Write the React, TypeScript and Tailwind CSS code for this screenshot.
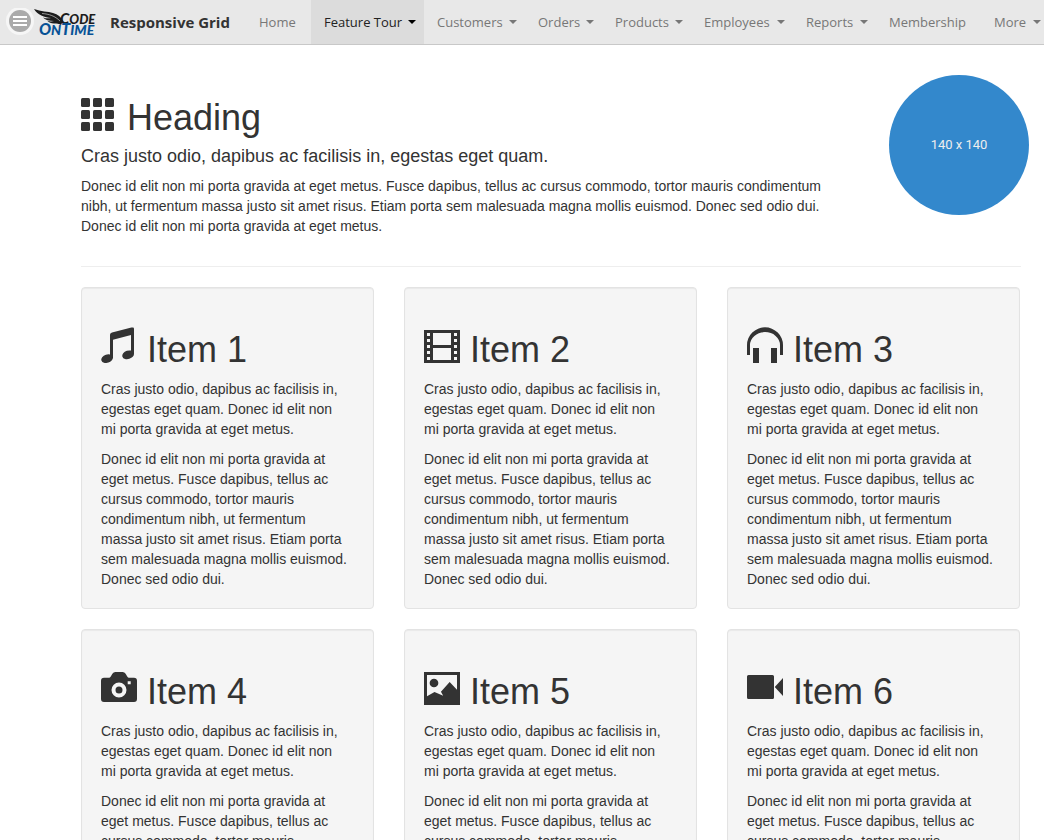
import type { ReactNode } from "react";

type NavEntry = { label: string; width: string; menu?: boolean; active?: boolean };

const navEntries: NavEntry[] = [
  { label: "Home", width: "w-[65px]" },
  { label: "Feature Tour", width: "w-[113px]", menu: true, active: true },
  { label: "Customers", width: "w-[101px]", menu: true },
  { label: "Orders", width: "w-[77px]", menu: true },
  { label: "Products", width: "w-[89px]", menu: true },
  { label: "Employees", width: "w-[102px]", menu: true },
  { label: "Reports", width: "w-[83px]", menu: true },
  { label: "Membership", width: "w-[105px]" },
  { label: "More", width: "w-[68px]", menu: true },
];

function Glyph({ children }: { children: ReactNode }) {
  return (
    <svg viewBox="0 0 1200 1200" className="size-9 shrink-0" fill="currentColor" fillRule="evenodd" aria-hidden="true">
      {children}
    </svg>
  );
}

const cells = [0, 400, 800];
const GridIcon = () => (
  <Glyph>
    {cells.map((y) => cells.map((x) => <rect key={`${x}-${y}`} x={x} y={y + 100} width="300" height="300" rx="50" />))}
  </Glyph>
);

const MusicIcon = () => (
  <Glyph>
    <path
      transform="translate(0 1200) scale(1 -1)"
      d="M368 1017l645 163q39 15 63 0t24 -49v-831q0 -55 -41.5 -95.5t-111.5 -63.5q-79 -25 -147 -4.5t-86 75t25.5 111.5t122.5 82q72 24 138 8v521l-600 -155v-606q0 -42 -44 -90t-109 -69q-79 -26 -147 -5.5t-86 75.5t25.5 111.5t122.5 82.5q72 24 138 7v639q0 38 14.5 59t53.5 34z"
    />
  </Glyph>
);

const FilmIcon = () => (
  <Glyph>
    <path d="M0 100h1200v1100H0zM100 200v100h100V200zM100 400v100h100V400zM100 600v100h100V600zM100 800v100h100V800zM100 1000v100h100v-100zM1000 200v100h100V200zM1000 400v100h100V400zM1000 600v100h100V600zM1000 800v100h100V800zM1000 1000v100h100v-100zM300 200v400h600V200zM300 700v400h600V700z" />
  </Glyph>
);

const HeadphonesIcon = () => (
  <Glyph>
    <path d="M0 930V600a600 590 0 0 1 1200 0v330h-100V600a500 430 0 0 0-1000 0v330zM200 700h200v500H200zM800 700h200v500H800z" />
  </Glyph>
);

const CameraIcon = () => (
  <Glyph>
    <path d="M100 290h170q30 0 50-30l60-100q35-60 100-60h240q65 0 100 60l60 100q20 30 50 30h170q100 0 100 100v610q0 100-100 100H100q-100 0-100-100V390q0-100 100-100zM600 450a250 250 0 1 0 0 500a250 250 0 1 0 0-500zM600 583a117 117 0 1 1 0 234a117 117 0 1 1 0-234zM890 410v100h100V410z" />
  </Glyph>
);

const PictureIcon = () => (
  <Glyph>
    <path d="M0 100h1200v1100H0zM100 200v710l250-140 290 120-75-130 290-325 245 260V200zM333 322a145 145 0 1 1 0 290a145 145 0 1 1 0-290z" />
  </Glyph>
);

const VideoIcon = () => (
  <Glyph>
    <path d="M50 200h800q50 0 50 50v700q0 50-50 50H50q-50 0-50-50V250q0-50 50-50zM925 600l275-300v600z" />
  </Glyph>
);

const items = [
  { title: "Item 1", icon: <MusicIcon /> },
  { title: "Item 2", icon: <FilmIcon /> },
  { title: "Item 3", icon: <HeadphonesIcon /> },
  { title: "Item 4", icon: <CameraIcon /> },
  { title: "Item 5", icon: <PictureIcon /> },
  { title: "Item 6", icon: <VideoIcon /> },
];

function Title({ icon, children }: { icon: ReactNode; children: ReactNode }) {
  return (
    <h1 className="mb-2.5 flex h-[42px] gap-2.5 text-4xl">
      {icon}
      <span className="self-end leading-[38px]">{children}</span>
    </h1>
  );
}

function Logo() {
  return (
    <svg viewBox="0 0 64 30" className="h-[30px] w-16 shrink-0 overflow-visible" role="img" aria-label="Code OnTime">
      <g transform="translate(0 2)">
        <path
          fill="#1c1c1c"
          d="M0 0C7 2.500 14 2.500 19 4C24 5.500 27 8 29 12L27 16C25 14.500 23 14.500 20 14.500C17 14.500 15 13.500 13.500 12C16 12.500 18 12.500 20 12C15 12 11 11 9 8.500C12 9.500 15 9.500 17 9C11 8.500 3 5.500 0 0Z"
        />
        <path fill="none" stroke="#e8e8e8" strokeWidth="0.6" d="M8 4.500C15 5 21 7 26 12" />
      </g>
      <g fontFamily="Lato, 'Open Sans', sans-serif" fontStyle="italic" fontWeight="900">
        <text x="26" y="17" fill="#1c1c1c" fontSize="15">
          C<tspan fontSize="13">ODE</tspan>
        </text>
        <text x="5" y="28" fill="#075296" fontSize="16">
          O<tspan fontSize="14">N</tspan>T<tspan fontSize="14">IME</tspan>
        </text>
      </g>
    </svg>
  );
}

function NavBar() {
  return (
    <header className="flex h-[45px] shrink-0 items-stretch overflow-hidden border-b border-[#c8c8c8] bg-[#e8e8e8] font-['Open_Sans',sans-serif]">
      <div className="flex w-[246px] shrink-0 items-center pl-1.5">
        <button type="button" aria-label="Menu" className="size-7 shrink-0 rounded-full">
          <svg viewBox="0 0 28 28" className="size-7" aria-hidden="true">
            <circle cx="14" cy="13" r="14" fill="#f6f6f6" />
            <circle cx="14" cy="13" r="11" fill="#aaa" />
            <path d="M7 9h14M7 13h14M7 17h14" stroke="#fff" strokeWidth="2" />
          </svg>
        </button>
        <Logo />
        <a href="#" className="ml-3 text-[15px] font-bold whitespace-nowrap text-[#333]">
          Responsive Grid
        </a>
      </div>
      <nav className="flex">
        {navEntries.map((entry) => (
          <a
            key={entry.label}
            href="#"
            className={`flex shrink-0 items-center justify-between pr-2 pl-[13px] text-[13px] whitespace-nowrap ${entry.width} ${
              entry.active ? "bg-[#dcdcdc] text-[#222]" : "text-[#777]"
            }`}
          >
            {entry.label}
            {entry.menu && (
              <svg viewBox="0 0 8 4" className={`h-1 w-2 ${entry.active ? "text-black" : ""}`} fill="currentColor" aria-hidden="true">
                <path d="M0 0h8L4 4z" />
              </svg>
            )}
          </a>
        ))}
      </nav>
    </header>
  );
}

export default function App() {
  return (
    <div className="flex h-screen flex-col bg-white font-['Liberation_Sans',Arial,sans-serif] text-sm leading-5 text-[#333]">
      <NavBar />
      <main className="min-h-0 flex-1 overflow-y-auto pt-[30px] pr-[23px] pb-5 pl-[81px] [scrollbar-width:none]">
        <section className="-mr-2 flex gap-[30px]">
          <div className="flex-1 pt-5">
            <Title icon={<GridIcon />}>Heading</Title>
            <h4 className="mb-2.5 text-lg leading-[19px]">Cras justo odio, dapibus ac facilisis in, egestas eget quam.</h4>
            <p className="pr-5">
              Donec id elit non mi porta gravida at eget metus. Fusce dapibus, tellus ac cursus commodo, tortor mauris
              condimentum nibh, ut fermentum massa justo sit amet risus. Etiam porta sem malesuada magna mollis euismod.
              Donec sed odio dui. Donec id elit non mi porta gravida at eget metus.
            </p>
          </div>
          <div className="flex size-[140px] shrink-0 items-center justify-center rounded-full bg-[#3388cc] font-[Roboto,sans-serif] text-[13px] text-[#eee]">
            140 x 140
          </div>
        </section>
        <hr className="mt-[30px] mb-5 border-[#eee]" />
        <div className="mr-px grid grid-cols-3 gap-x-[30px] gap-y-5">
          {items.map((item) => (
            <article
              key={item.title}
              className="rounded border border-[#e3e3e3] bg-[#f5f5f5] pt-[39px] pr-6 pb-[19px] pl-[19px] shadow-[inset_0_1px_1px_rgba(0,0,0,0.05)]"
            >
              <Title icon={item.icon}>{item.title}</Title>
              <p className="mb-2.5">
                Cras justo odio, dapibus ac facilisis in, egestas eget quam. Donec id elit non mi porta gravida at eget
                metus.
              </p>
              <p>
                Donec id elit non mi porta gravida at eget metus. Fusce dapibus, tellus ac cursus commodo, tortor mauris
                condimentum nibh, ut fermentum massa justo sit amet risus. Etiam porta sem malesuada magna mollis
                euismod. Donec sed odio dui.
              </p>
            </article>
          ))}
        </div>
      </main>
    </div>
  );
}
